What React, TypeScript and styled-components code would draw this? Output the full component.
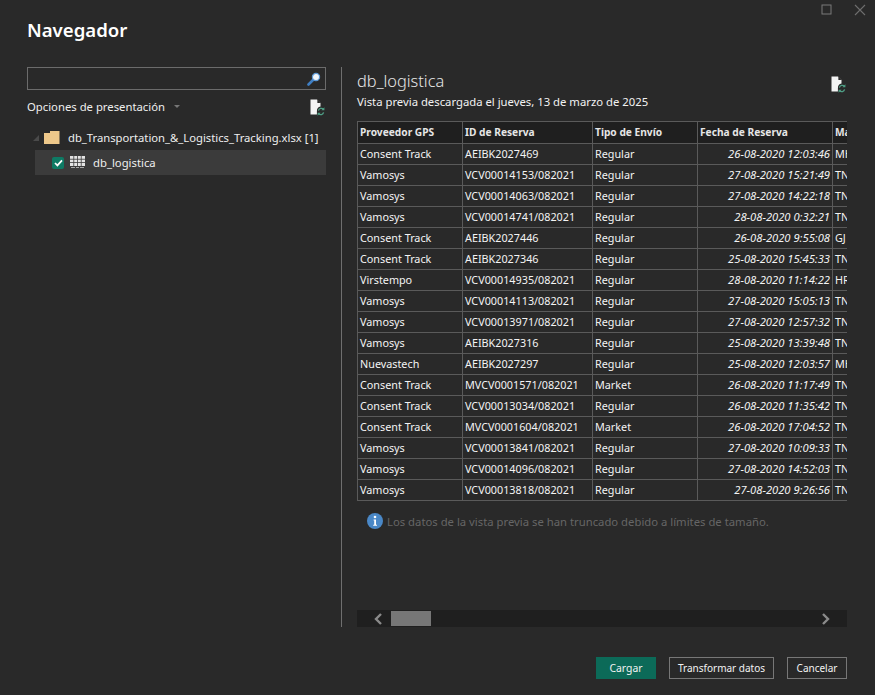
import React from "react";
import styled, { createGlobalStyle } from "styled-components";

const rows = [
  ["Consent Track", "AEIBK2027469", "Regular", "26-08-2020 12:03:46", "MH"],
  ["Vamosys", "VCV00014153/082021", "Regular", "27-08-2020 15:21:49", "TN"],
  ["Vamosys", "VCV00014063/082021", "Regular", "27-08-2020 14:22:18", "TN"],
  ["Vamosys", "VCV00014741/082021", "Regular", "28-08-2020 0:32:21", "TN"],
  ["Consent Track", "AEIBK2027446", "Regular", "26-08-2020 9:55:08", "GJ"],
  ["Consent Track", "AEIBK2027346", "Regular", "25-08-2020 15:45:33", "TN"],
  ["Virstempo", "VCV00014935/082021", "Regular", "28-08-2020 11:14:22", "HR"],
  ["Vamosys", "VCV00014113/082021", "Regular", "27-08-2020 15:05:13", "TN"],
  ["Vamosys", "VCV00013971/082021", "Regular", "27-08-2020 12:57:32", "TN"],
  ["Vamosys", "AEIBK2027316", "Regular", "25-08-2020 13:39:48", "TN"],
  ["Nuevastech", "AEIBK2027297", "Regular", "25-08-2020 12:03:57", "MH"],
  ["Consent Track", "MVCV0001571/082021", "Market", "26-08-2020 11:17:49", "TN"],
  ["Consent Track", "VCV00013034/082021", "Regular", "26-08-2020 11:35:42", "TN"],
  ["Consent Track", "MVCV0001604/082021", "Market", "26-08-2020 17:04:52", "TN"],
  ["Vamosys", "VCV00013841/082021", "Regular", "27-08-2020 10:09:33", "TN"],
  ["Vamosys", "VCV00014096/082021", "Regular", "27-08-2020 14:52:03", "TN"],
  ["Vamosys", "VCV00013818/082021", "Regular", "27-08-2020 9:26:56", "TN"],
];

const RefreshFile = () => (
  <svg width="15" height="18" viewBox="0 0 15 18">
    <path d="M0.5 0.5h6.5l3.5 3.5v3.6a4.4 4.4 0 0 0-3.6 4.3v3.6H0.5z" fill="#f4f4f4" />
    <path d="M7.4 0.6v3.3h3.1z" fill="#292929" />
    <path d="M8.4 11.6a3 3 0 0 1 5-1.4M13.6 13.4a3 3 0 0 1-5 1.4" fill="none" stroke="#4f9f86" strokeWidth="1.3" />
    <path d="M14.4 8.2v3h-3zM7.6 16.8v-3h3z" fill="#4f9f86" />
  </svg>
);

const App = () => {
  return (
    <Page>
      <GlobalStyle />
      <WindowControls>
        <svg width="11" height="11" viewBox="0 0 11 11">
          <rect x="1" y="1" width="9" height="9" fill="none" stroke="#7a7a7a" />
        </svg>
        <svg width="12" height="12" viewBox="0 0 12 12">
          <path d="M1 1l10 10M11 1L1 11" stroke="#6e6e6e" strokeWidth="1.1" />
        </svg>
      </WindowControls>
      <Title>Navegador</Title>
      <Body>
        <LeftPanel>
          <SearchBox>
            <svg width="14" height="14" viewBox="0 0 14 14">
              <path d="M1.5 12.5L6 8" stroke="#3f7fc4" strokeWidth="2.6" strokeLinecap="round" />
              <circle cx="9" cy="5" r="3.6" fill="#f2f6fa" stroke="#5f9ad6" strokeWidth="1.2" />
            </svg>
          </SearchBox>
          <OptionsRow>
            <OptionsLabel>
              Opciones de presentación
              <Caret />
            </OptionsLabel>
            <RefreshFile />
          </OptionsRow>
          <TreeParent>
            <Expander />
            <svg width="16" height="13" viewBox="0 0 16 13">
              <path d="M0 2h6V0h9.5v13H0z" fill="#eec88a" />
            </svg>
            <span>db_Transportation_&amp;_Logistics_Tracking.xlsx [1]</span>
          </TreeParent>
          <TreeChild>
            <CheckMark>
              <svg width="9" height="8" viewBox="0 0 9 8">
                <path d="M1 4l2.4 2.4L8 1.4" fill="none" stroke="#fff" strokeWidth="1.7" />
              </svg>
            </CheckMark>
            <svg width="15" height="13" viewBox="0 0 15 13">
              <path d="M0 0h15v10H0z" fill="#e4e4e4" />
              <path d="M0 3.25h15M0 6.5h15M3.75 0v10M7.5 0v10M11.25 0v10" stroke="#3c3c3c" strokeWidth="0.8" />
              <path d="M1 11.5h4M6 11.5h3M10 11.5h4" stroke="#a8a8a8" />
            </svg>
            <ChildName>db_logistica</ChildName>
          </TreeChild>
        </LeftPanel>
        <Divider />
        <RightPanel>
          <PreviewHeader>
            <div>
              <PreviewTitle>db_logistica</PreviewTitle>
              <PreviewSub>Vista previa descargada el jueves, 13 de marzo de 2025</PreviewSub>
            </div>
            <RefreshFile />
          </PreviewHeader>
          <TableClip>
            <DataTable>
              <thead>
                <tr>
                  <HeadCell $width={105}>Proveedor GPS</HeadCell>
                  <HeadCell $width={130}>ID de Reserva</HeadCell>
                  <HeadCell $width={105}>Tipo de Envío</HeadCell>
                  <HeadCell $width={135}>Fecha de Reserva</HeadCell>
                  <HeadCell $width={60}>Matrícula</HeadCell>
                </tr>
              </thead>
              <tbody>
                {rows.map((row, i) => (
                  <tr key={i}>
                    <Cell>{row[0]}</Cell>
                    <Cell>{row[1]}</Cell>
                    <Cell>{row[2]}</Cell>
                    <DateCell>{row[3]}</DateCell>
                    <Cell>{row[4]}</Cell>
                  </tr>
                ))}
              </tbody>
            </DataTable>
          </TableClip>
          <Notice>
            <svg width="16" height="16" viewBox="0 0 16 16">
              <circle cx="8" cy="8" r="8" fill="#4a88c7" />
              <circle cx="8" cy="4" r="1.3" fill="#fff" />
              <path d="M6.6 6.6h2.4v5.2h1v1H6.2v-1h1V7.6h-.6z" fill="#fff" />
            </svg>
            Los datos de la vista previa se han truncado debido a límites de tamaño.
          </Notice>
          <ScrollBar>
            <svg width="12" height="12" viewBox="0 0 12 12">
              <path d="M9 1L4 6l5 5" fill="none" stroke="#8a8a8a" strokeWidth="2.4" />
            </svg>
            <ScrollThumb />
            <svg width="12" height="12" viewBox="0 0 12 12">
              <path d="M3 1l5 5-5 5" fill="none" stroke="#8a8a8a" strokeWidth="2.4" />
            </svg>
          </ScrollBar>
        </RightPanel>
      </Body>
      <Footer>
        <PrimaryButton>Cargar</PrimaryButton>
        <Button $width={105}>Transformar datos</Button>
        <Button $width={60}>Cancelar</Button>
      </Footer>
    </Page>
  );
};

export default App;

const GlobalStyle = createGlobalStyle`
  html, body {
    margin: 0;
    padding: 0;
    background: #292929;
  }
`;

const Page = styled.div`
  width: 875px;
  height: 695px;
  box-sizing: border-box;
  display: flex;
  flex-direction: column;
  padding: 4px 28px 0 27px;
  background: #292929;
  color: #f2f2f2;
  font-family: "Noto Sans", "Open Sans", sans-serif;
  font-size: 11px;
  overflow: hidden;
`;

const WindowControls = styled.div`
  display: flex;
  justify-content: flex-end;
  align-items: flex-start;
  gap: 22px;
  margin-right: -19px;
  height: 12px;
`;

const Title = styled.h1`
  margin: 0;
  height: 51px;
  font-size: 18.6px;
  line-height: 28px;
  font-weight: 600;
  color: #fff;
`;

const Body = styled.div`
  display: flex;
  height: 560px;
`;

const LeftPanel = styled.div`
  width: 299px;
  display: flex;
  flex-direction: column;
`;

const SearchBox = styled.div`
  height: 23px;
  box-sizing: border-box;
  border: 1px solid #6b6b6b;
  display: flex;
  align-items: center;
  justify-content: flex-end;
  padding-right: 4px;
`;

const OptionsRow = styled.div`
  display: flex;
  justify-content: space-between;
  align-items: center;
  height: 35px;
  padding-right: 1px;
  box-sizing: border-box;
`;

const OptionsLabel = styled.div`
  display: flex;
  align-items: center;
  margin-top: -2px;
  font-size: 11.3px;
  color: #eee;
`;

const Caret = styled.span`
  width: 0;
  height: 0;
  margin-left: 9px;
  border-left: 3px solid transparent;
  border-right: 3px solid transparent;
  border-top: 3px solid #777;
`;

const TreeParent = styled.div`
  display: flex;
  align-items: center;
  height: 25px;
  margin-left: 6px;
  gap: 8px;
  font-size: 11.25px;
  color: #eee;
  white-space: nowrap;
`;

const Expander = styled.span`
  width: 0;
  height: 0;
  border-left: 6px solid transparent;
  border-bottom: 6px solid #4a4a4a;
  margin-right: -3px;
`;

const TreeChild = styled.div`
  display: flex;
  align-items: center;
  height: 25px;
  margin-left: 8px;
  padding-left: 17px;
  background: #3b3b3b;
`;

const CheckMark = styled.span`
  width: 12px;
  height: 12px;
  border-radius: 2px;
  background: #0e7a64;
  display: flex;
  align-items: center;
  justify-content: center;
  margin-right: 6px;
`;

const ChildName = styled.span`
  margin-left: 8px;
  font-size: 11.3px;
  color: #eee;
`;

const Divider = styled.div`
  width: 1px;
  margin: 0 15px;
  background: #6f6f6f;
`;

const RightPanel = styled.div`
  width: 490px;
  display: flex;
  flex-direction: column;
`;

const PreviewHeader = styled.div`
  display: flex;
  justify-content: space-between;
  align-items: flex-start;
  height: 54px;
  padding-right: 1px;
  & > svg {
    margin-top: 9px;
  }
`;

const PreviewTitle = styled.div`
  margin-top: 2px;
  font-size: 16.4px;
  line-height: 24px;
  font-weight: 300;
  color: #e6e6e6;
`;

const PreviewSub = styled.div`
  margin-top: 1px;
  font-size: 11.3px;
  line-height: 16px;
  color: #f2f2f2;
`;

const TableClip = styled.div`
  width: 490px;
  overflow: hidden;
`;

const DataTable = styled.table`
  border-collapse: collapse;
  table-layout: fixed;
  width: 535px;
  font-size: 10.8px;
`;

const HeadCell = styled.th<{ $width: number }>`
  width: ${(p) => p.$width}px;
  height: 22px;
  box-sizing: border-box;
  padding: 0 2px 2px;
  border: 1px solid #5a5a5a;
  background: #1f1f1f;
  color: #e6e6e6;
  font-size: 10.2px;
  font-weight: 700;
  text-align: left;
  white-space: nowrap;
  overflow: hidden;
`;

const Cell = styled.td`
  height: 21px;
  box-sizing: border-box;
  padding: 0 2px 2px;
  border: 1px solid #5a5a5a;
  color: #f4f4f4;
  white-space: nowrap;
  overflow: hidden;
`;

const DateCell = styled(Cell)`
  text-align: right;
  font-style: italic;
  font-size: 11.2px;
`;

const Notice = styled.div`
  display: flex;
  align-items: center;
  gap: 4px;
  height: 16px;
  margin: 12px 0 0 10px;
  color: #666;
  font-size: 11.3px;
`;

const ScrollBar = styled.div`
  margin-top: auto;
  height: 17px;
  background: #1f1f1f;
  display: flex;
  align-items: center;
  padding: 0 15px;
  gap: 7px;
  & > svg:last-child {
    margin-left: auto;
  }
`;

const ScrollThumb = styled.div`
  width: 40px;
  height: 15px;
  background: #777;
`;

const Footer = styled.div`
  display: flex;
  justify-content: flex-end;
  gap: 13px;
  margin-top: 30px;
`;

const Button = styled.button<{ $width: number }>`
  width: ${(p) => p.$width}px;
  height: 22px;
  box-sizing: border-box;
  padding: 0;
  background: transparent;
  border: 1px solid #777;
  color: #f2f2f2;
  font: inherit;
  font-size: 10px;
`;

const PrimaryButton = styled.button`
  width: 60px;
  height: 22px;
  padding: 0;
  background: #0c6a58;
  border: 0;
  color: #f2f2f2;
  font: inherit;
  font-size: 10.4px;
`;
